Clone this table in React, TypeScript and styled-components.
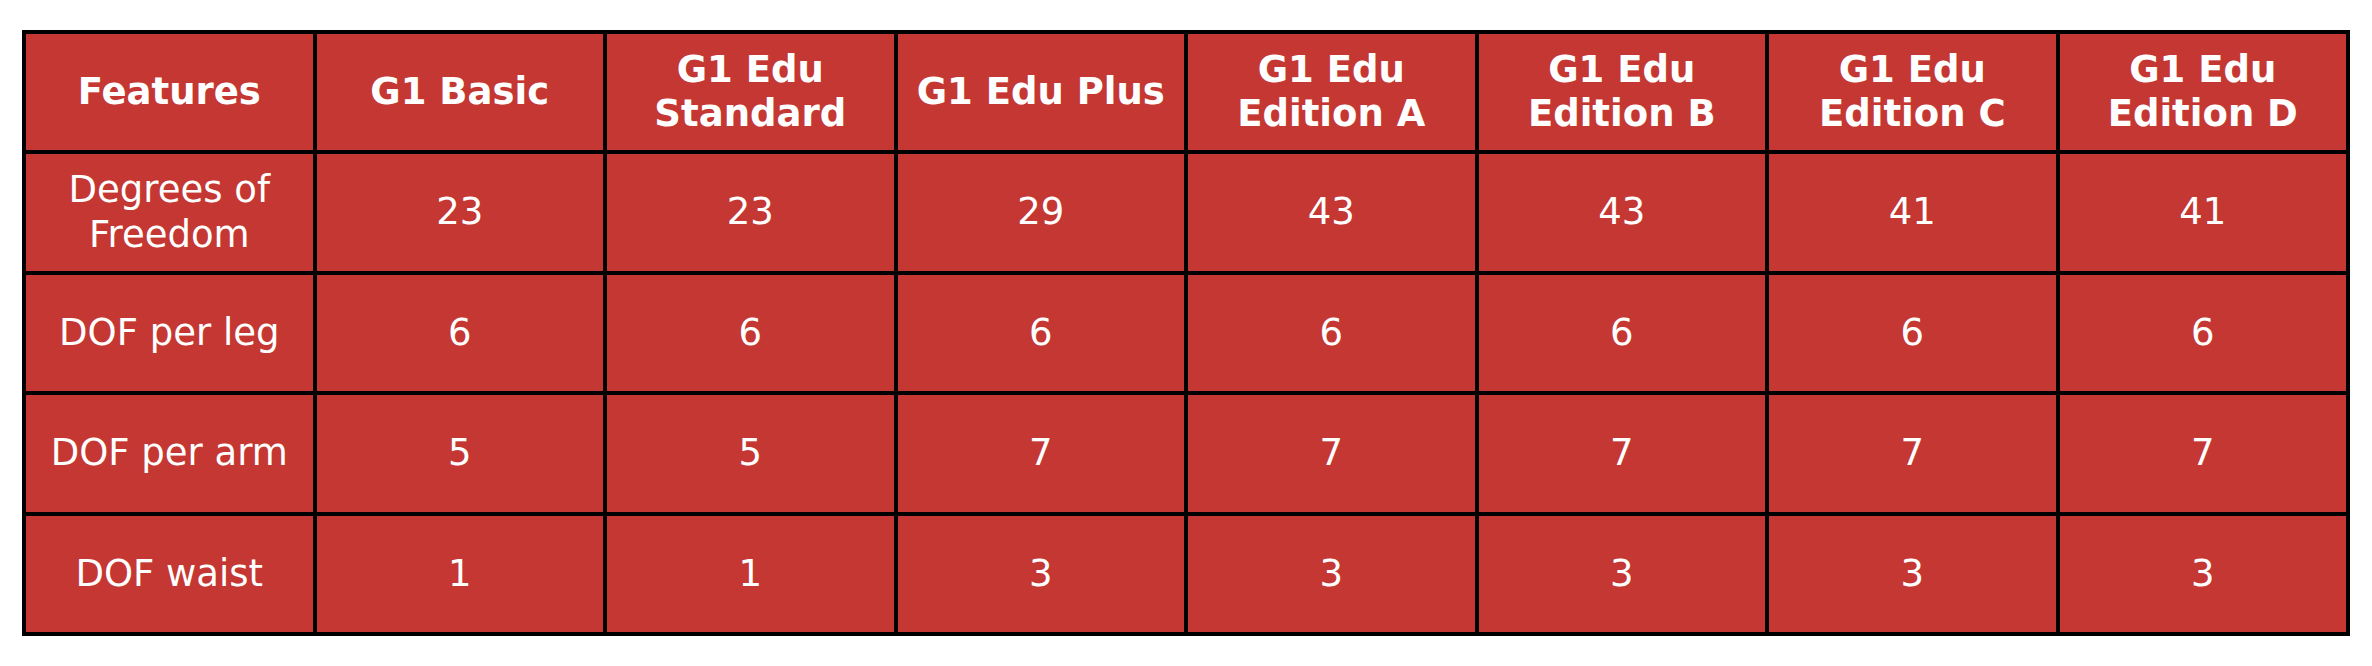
import React from 'react';
import styled, { createGlobalStyle } from 'styled-components';

const GlobalStyle = createGlobalStyle`
  html, body {
    margin: 0;
    padding: 0;
    background: #ffffff;
  }
`;

const Page = styled.div`
  padding: 30px 0 0 22px;
  font-family: 'DejaVu Sans', 'Liberation Sans', sans-serif;
`;

const Table = styled.div`
  display: grid;
  grid-template-columns: repeat(8, 1fr);
  grid-template-rows: repeat(5, 1fr);
  gap: 4px;
  padding: 4px;
  width: 2328px;
  height: 606px;
  box-sizing: border-box;
  background: #000000;
`;

const Cell = styled.div<{ $head?: boolean }>`
  display: flex;
  align-items: center;
  justify-content: center;
  text-align: center;
  padding: 0 14px;
  background: #c53732;
  color: #ffffff;
  font-size: 37px;
  line-height: 1.2;
  font-weight: ${(p) => (p.$head ? 700 : 400)};
`;

const headers = [
  'Features',
  'G1 Basic',
  'G1 Edu Standard',
  'G1 Edu Plus',
  'G1 Edu Edition A',
  'G1 Edu Edition B',
  'G1 Edu Edition C',
  'G1 Edu Edition D',
];

const rows: string[][] = [
  ['Degrees of Freedom', '23', '23', '29', '43', '43', '41', '41'],
  ['DOF per leg', '6', '6', '6', '6', '6', '6', '6'],
  ['DOF per arm', '5', '5', '7', '7', '7', '7', '7'],
  ['DOF waist', '1', '1', '3', '3', '3', '3', '3'],
];

const App: React.FC = () => {
  return (
    <Page>
      <GlobalStyle />
      <Table>
        {headers.map((h) => (
          <Cell key={h} $head>
            {h}
          </Cell>
        ))}
        {rows.map((row, r) =>
          row.map((value, c) => <Cell key={`${r}-${c}`}>{value}</Cell>)
        )}
      </Table>
    </Page>
  );
};

export default App;
